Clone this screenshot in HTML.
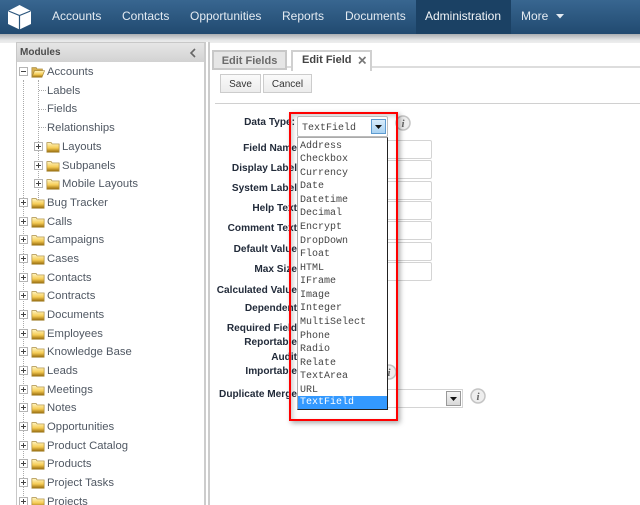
<!DOCTYPE html>
<html><head><meta charset="utf-8"><style>
html,body{margin:0;padding:0}
body{width:640px;height:505px;overflow:hidden;position:relative;background:#fff;font-family:"Liberation Sans",Arial,sans-serif}
div,span,svg{position:absolute}
#nav{left:0;top:0;width:640px;height:34px;background:linear-gradient(#386690,#214a70)}
#shadow{left:0;top:34px;width:640px;height:9px;background:linear-gradient(#a9adb1,#e6e7e8 70%,#eee)}
.n{top:9px;font-size:12px;line-height:15px;color:#e4ebf2;white-space:nowrap}
#adm{left:416px;top:0;width:95px;height:34px;background:#1b4164}
#panel{left:16px;top:42px;width:190px;height:463px;box-sizing:border-box;border:1px solid #c8c8c8;border-bottom:0;border-right:2px solid #ccc;overflow:hidden}
#phead{left:0;top:0;width:188px;height:19px;background:linear-gradient(#e6e6e6,#d2d2d2);}
.t{font-size:11.3px;line-height:14px;color:#505863;white-space:nowrap}
.b{left:19px;width:9px;height:9px;box-sizing:border-box;border:1px solid #b4b4b4;background:#fff}
.b:before{content:"";position:absolute;left:1px;top:3px;width:5px;height:1px;background:#444}
.b.p:after{content:"";position:absolute;left:3px;top:1px;width:1px;height:5px;background:#444}
.f{width:14px;height:12px;margin-top:1px}
.v{border-left:1px dotted #aaa;width:0}
.h{border-top:1px dotted #aaa;height:0}
.l{font-size:10.1px;font-weight:bold;line-height:13px;color:#222b3a;text-align:right;width:160px;white-space:nowrap;margin-top:1px}
.m{left:300px;font-family:"Liberation Mono",monospace;font-size:10px;line-height:13px;color:#444;white-space:pre;margin-top:1px}
.i{width:18px;height:18px}
.in{left:380px;width:52px;height:19px;box-sizing:border-box;border:1px solid #d4d4d4;border-radius:2px;background:#fff}
.btn{top:74px;height:19px;box-sizing:border-box;border:1px solid #ccc;background:linear-gradient(#fafafa,#ececec);font-size:10px;line-height:19px;color:#333;text-align:center}
</style></head><body>
<svg width="0" height="0" style="left:0;top:0"><defs>
<linearGradient id="g" x1="0" y1="0" x2="0" y2="1"><stop offset="0" stop-color="#fff6c4"/><stop offset=".55" stop-color="#f6cc55"/><stop offset="1" stop-color="#96690a"/></linearGradient>
<symbol id="fo" viewBox="0 0 16 13"><path d="M1 1.500h5l1 1.500h8v9.500h-14z" fill="url(#g)" stroke="#a98a3c" stroke-width=".8"/></symbol>
<symbol id="fx" viewBox="0 0 16 13"><path d="M1 1.500h5l1 1.500h6v2h-9l-3 7z" fill="#d8b050" stroke="#a98a3c" stroke-width=".8"/><path d="M4 5h11.500l-3 7.500h-11.500z" fill="url(#g)" stroke="#a98a3c" stroke-width=".8"/></symbol>
<symbol id="ii" viewBox="0 0 18 18"><circle cx="9" cy="9" r="7" fill="#eee" stroke="#c4c4c4" stroke-width="1.500"/><text x="9" y="13" font-family="Liberation Serif" font-style="italic" font-weight="bold" font-size="11" fill="#666" text-anchor="middle">i</text></symbol>
</defs></svg>

<div id="nav"></div><div id="adm"></div><div id="shadow"></div>
<svg style="left:7px;top:4px" width="25" height="26" viewBox="0 0 25 26"><path d="M12.500 1L24 7v13l-11.500 5.500L1 20V7z" fill="#fff"/><path d="M12.500 11.500V26M1.500 7l11 4.500 11-4.500" fill="none" stroke="#2b557c" stroke-width="1.200"/></svg>
<span class="n" style="left:52px">Accounts</span>
<span class="n" style="left:122px">Contacts</span>
<span class="n" style="left:190px">Opportunities</span>
<span class="n" style="left:282px">Reports</span>
<span class="n" style="left:345px">Documents</span>
<span class="n" style="left:425px;color:#f2f5f8">Administration</span>
<span class="n" style="left:521px">More</span>
<svg style="left:556px;top:14px" width="8" height="5"><path d="M0 0h8L4 4.500z" fill="#e4ebf2"/></svg>

<div id="panel">
<div id="phead"></div>
<span style="left:3px;top:3px;font-size:10px;font-weight:bold;line-height:14px;color:#4c4c4c">Modules</span>
<svg style="left:172px;top:5px" width="8" height="10"><path d="M6 1L2 5l4 4" fill="none" stroke="#666" stroke-width="1.600"/></svg>

<div class="v" style="left:6px;top:37px;height:426px"></div>
<div class="v" style="left:21px;top:37px;height:122px"></div>
<div class="h" style="left:22px;top:47px;width:7px"></div>
<div class="h" style="left:22px;top:66px;width:7px"></div>
<div class="h" style="left:22px;top:84px;width:7px"></div>

<div class="b" style="left:2px;top:24px"></div>
<svg class="f" style="left:14px;top:22px"><use href="#fx"/></svg>
<span class="t" style="left:30px;top:22px">Accounts</span>
<span class="t" style="left:30px;top:41px">Labels</span>
<span class="t" style="left:30px;top:59px">Fields</span>
<span class="t" style="left:30px;top:78px">Relationships</span>

<div class="b p" style="left:17px;top:99px"></div><svg class="f" style="left:29px;top:97px"><use href="#fo"/></svg><span class="t" style="left:45px;top:97px">Layouts</span>
<div class="b p" style="left:17px;top:118px"></div><svg class="f" style="left:29px;top:116px"><use href="#fo"/></svg><span class="t" style="left:45px;top:116px">Subpanels</span>
<div class="b p" style="left:17px;top:136px"></div><svg class="f" style="left:29px;top:134px"><use href="#fo"/></svg><span class="t" style="left:45px;top:134px">Mobile Layouts</span>

<div class="b p" style="left:2px;top:155px"></div><svg class="f" style="left:14px;top:153px"><use href="#fo"/></svg><span class="t" style="left:30px;top:153px">Bug Tracker</span>
<div class="b p" style="left:2px;top:174px"></div><svg class="f" style="left:14px;top:172px"><use href="#fo"/></svg><span class="t" style="left:30px;top:172px">Calls</span>
<div class="b p" style="left:2px;top:192px"></div><svg class="f" style="left:14px;top:190px"><use href="#fo"/></svg><span class="t" style="left:30px;top:190px">Campaigns</span>
<div class="b p" style="left:2px;top:211px"></div><svg class="f" style="left:14px;top:209px"><use href="#fo"/></svg><span class="t" style="left:30px;top:209px">Cases</span>
<div class="b p" style="left:2px;top:230px"></div><svg class="f" style="left:14px;top:228px"><use href="#fo"/></svg><span class="t" style="left:30px;top:228px">Contacts</span>
<div class="b p" style="left:2px;top:248px"></div><svg class="f" style="left:14px;top:246px"><use href="#fo"/></svg><span class="t" style="left:30px;top:246px">Contracts</span>
<div class="b p" style="left:2px;top:267px"></div><svg class="f" style="left:14px;top:265px"><use href="#fo"/></svg><span class="t" style="left:30px;top:265px">Documents</span>
<div class="b p" style="left:2px;top:286px"></div><svg class="f" style="left:14px;top:284px"><use href="#fo"/></svg><span class="t" style="left:30px;top:284px">Employees</span>
<div class="b p" style="left:2px;top:304px"></div><svg class="f" style="left:14px;top:302px"><use href="#fo"/></svg><span class="t" style="left:30px;top:302px">Knowledge Base</span>
<div class="b p" style="left:2px;top:323px"></div><svg class="f" style="left:14px;top:321px"><use href="#fo"/></svg><span class="t" style="left:30px;top:321px">Leads</span>
<div class="b p" style="left:2px;top:342px"></div><svg class="f" style="left:14px;top:340px"><use href="#fo"/></svg><span class="t" style="left:30px;top:340px">Meetings</span>
<div class="b p" style="left:2px;top:360px"></div><svg class="f" style="left:14px;top:358px"><use href="#fo"/></svg><span class="t" style="left:30px;top:358px">Notes</span>
<div class="b p" style="left:2px;top:379px"></div><svg class="f" style="left:14px;top:377px"><use href="#fo"/></svg><span class="t" style="left:30px;top:377px">Opportunities</span>
<div class="b p" style="left:2px;top:398px"></div><svg class="f" style="left:14px;top:396px"><use href="#fo"/></svg><span class="t" style="left:30px;top:396px">Product Catalog</span>
<div class="b p" style="left:2px;top:416px"></div><svg class="f" style="left:14px;top:414px"><use href="#fo"/></svg><span class="t" style="left:30px;top:414px">Products</span>
<div class="b p" style="left:2px;top:435px"></div><svg class="f" style="left:14px;top:433px"><use href="#fo"/></svg><span class="t" style="left:30px;top:433px">Project Tasks</span>
<div class="b p" style="left:2px;top:454px"></div><svg class="f" style="left:14px;top:452px"><use href="#fo"/></svg><span class="t" style="left:30px;top:452px">Projects</span>
</div>

<div style="left:206px;top:42px;width:2px;height:463px;background:#fff"></div>
<div style="left:208px;top:42px;width:2px;height:463px;background:#ccc"></div>

<div style="left:212px;top:66px;width:428px;height:2px;background:#ddd"></div>
<div style="left:212px;top:50px;width:75px;height:20px;box-sizing:border-box;border:2px solid #c8c8c8;background:#e6e6e6;font-size:11px;font-weight:bold;line-height:18px;color:#6b6b6b;text-align:center">Edit Fields</div>
<div style="left:291px;top:50px;width:81px;height:21px;box-sizing:border-box;border:2px solid #d0d0d0;border-bottom:0;background:#fff"></div>
<span style="left:302px;top:53px;font-size:11px;font-weight:bold;line-height:14px;color:#444;white-space:nowrap">Edit Field</span>
<svg style="left:358px;top:56px" width="9" height="9"><path d="M1 1l6.500 6.500M7.500 1L1 7.500" stroke="#777" stroke-width="1.600"/></svg>

<div class="btn" style="left:220px;width:41px">Save</div>
<div class="btn" style="left:263px;width:49px">Cancel</div>
<div style="left:215px;top:103px;width:425px;height:1px;background:#d0d0d0"></div>

<div class="l" style="left:135px;top:115px">Data Type:</div>
<div class="l" style="left:137px;top:141px">Field Name</div>
<div class="l" style="left:137px;top:161px">Display Label</div>
<div class="l" style="left:137px;top:181px">System Label</div>
<div class="l" style="left:137px;top:201px">Help Text</div>
<div class="l" style="left:137px;top:221px">Comment Text</div>
<div class="l" style="left:137px;top:242px">Default Value</div>
<div class="l" style="left:137px;top:262px">Max Size</div>
<div class="l" style="left:137px;top:283px">Calculated Value</div>
<div class="l" style="left:137px;top:301px">Dependent</div>
<div class="l" style="left:137px;top:321px">Required Field</div>
<div class="l" style="left:137px;top:335px">Reportable</div>
<div class="l" style="left:137px;top:350px">Audit</div>
<div class="l" style="left:137px;top:364px">Importable</div>
<div class="l" style="left:137px;top:387px">Duplicate Merge</div>

<div class="in" style="top:140px"></div>
<div class="in" style="top:160px"></div>
<div class="in" style="top:181px"></div>
<div class="in" style="top:201px"></div>
<div class="in" style="top:221px"></div>
<div class="in" style="top:242px"></div>
<div class="in" style="top:262px"></div>
<div style="left:380px;top:389px;width:83px;height:19px;box-sizing:border-box;border:1px solid #d4d4d4;background:#fff"></div>
<div style="left:446px;top:391px;width:15px;height:15px;box-sizing:border-box;border:1px solid #999;background:linear-gradient(#f4f4f4,#d8d8d8)"></div>
<svg style="left:450px;top:397px" width="7" height="4"><path d="M0 0h7L3.500 4z" fill="#111"/></svg>
<svg class="i" style="left:469px;top:387px"><use href="#ii"/></svg>
<svg class="i" style="left:380px;top:363px"><use href="#ii"/></svg>
<svg class="i" style="left:394px;top:114px"><use href="#ii"/></svg>

<div style="left:289px;top:112px;width:109px;height:309px;box-sizing:border-box;border:2px solid #f00;box-shadow:2px 2px 5px rgba(0,0,0,.35), inset 2px 2px 5px rgba(0,0,0,.2)"></div>

<div style="left:297px;top:116px;width:91px;height:21px;box-sizing:border-box;border:1px solid #bbb;border-radius:2px;background:#fff"></div>
<span class="m" style="left:302px;top:121px">TextField</span>
<div style="left:371px;top:119px;width:15px;height:15px;box-sizing:border-box;border:1px solid #5d9bd0;background:linear-gradient(#d8ecfb,#a9d2f2)"></div>
<svg style="left:375px;top:125px" width="7" height="4"><path d="M0 0h7L3.500 4z" fill="#111"/></svg>

<div style="left:297px;top:137px;width:91px;height:273px;box-sizing:border-box;border:1px solid #222;border-left-color:#aaa;border-top-color:#aaa;background:#fff"></div>
<div style="left:298px;top:396px;width:89px;height:13px;background:#3399ff"></div>
<span class="m" style="top:139px">Address</span>
<span class="m" style="top:152px">Checkbox</span>
<span class="m" style="top:166px">Currency</span>
<span class="m" style="top:179px">Date</span>
<span class="m" style="top:193px">Datetime</span>
<span class="m" style="top:206px">Decimal</span>
<span class="m" style="top:220px">Encrypt</span>
<span class="m" style="top:234px">DropDown</span>
<span class="m" style="top:247px">Float</span>
<span class="m" style="top:261px">HTML</span>
<span class="m" style="top:274px">IFrame</span>
<span class="m" style="top:288px">Image</span>
<span class="m" style="top:301px">Integer</span>
<span class="m" style="top:315px">MultiSelect</span>
<span class="m" style="top:329px">Phone</span>
<span class="m" style="top:342px">Radio</span>
<span class="m" style="top:356px">Relate</span>
<span class="m" style="top:369px">TextArea</span>
<span class="m" style="top:383px">URL</span>
<span class="m" style="top:395px;color:#fff">TextField</span>
</body></html>
